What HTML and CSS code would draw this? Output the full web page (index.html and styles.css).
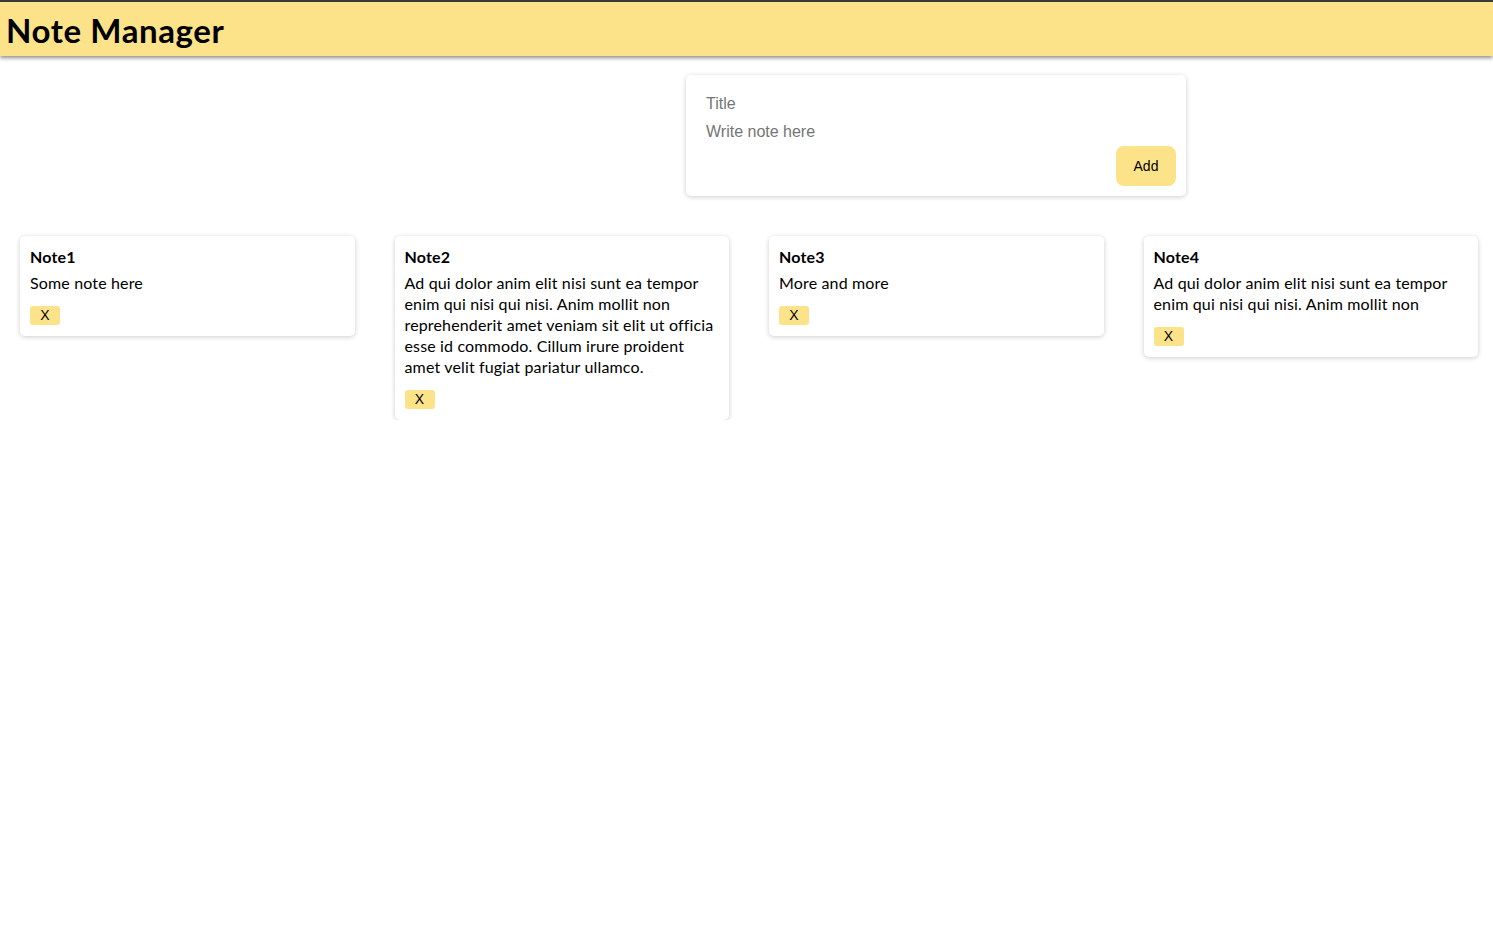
FILE: index.html
```
<!DOCTYPE html>
<html>
<head>
<meta charset="utf-8">
<title>Note Manager</title>
<link rel="stylesheet" href="styles.css">
</head>
<body>
<header class="header">
  <h1 class="header-title">Note Manager</h1>
</header>
<main class="main">
  <form class="note-form">
    <input class="form-title" type="text" placeholder="Title">
    <textarea class="form-body" placeholder="Write note here" rows="1"></textarea>
    <button class="add-btn" type="button">Add</button>
  </form>
  <section class="notes">
    <article class="note">
      <h2 class="note-title">Note1</h2>
      <p class="note-text">Some note here</p>
      <button class="del-btn" type="button">X</button>
    </article>
    <article class="note">
      <h2 class="note-title">Note2</h2>
      <p class="note-text">Ad qui dolor anim elit nisi sunt ea tempor enim qui nisi qui nisi. Anim mollit non reprehenderit amet veniam sit elit ut officia esse id commodo. Cillum irure proident amet velit fugiat pariatur ullamco.</p>
      <button class="del-btn" type="button">X</button>
    </article>
    <article class="note">
      <h2 class="note-title">Note3</h2>
      <p class="note-text">More and more</p>
      <button class="del-btn" type="button">X</button>
    </article>
    <article class="note">
      <h2 class="note-title">Note4</h2>
      <p class="note-text">Ad qui dolor anim elit nisi sunt ea tempor enim qui nisi qui nisi. Anim mollit non</p>
      <button class="del-btn" type="button">X</button>
    </article>
  </section>
</main>
</body>
</html>
```
FILE: styles.css
```
* { box-sizing: border-box; }

body {
  margin: 0;
  background: #ffffff;
  font-family: "Lato", "Noto Sans", sans-serif;
  color: #000;
}

.header {
  background: #fce38a;
  border-top: 2px solid #3a3a3a;
  height: 56px;
  padding: 2px 6px 0;
  display: flex;
  align-items: center;
  box-shadow: 0 2px 4px rgba(0, 0, 0, 0.45);
}

.header-title {
  margin: 0;
  font-size: 33px;
  font-weight: 700;
  line-height: 38px;
  letter-spacing: 0.6px;
}

.main {
  padding-top: 19px;
}

.note-form {
  width: 500px;
  margin-left: 686px;
  background: #fff;
  border-radius: 5px;
  box-shadow: 0 1px 5px rgba(0, 0, 0, 0.2);
  padding: 10px;
  display: flex;
  flex-direction: column;
}

.form-title,
.form-body {
  display: block;
  width: 100%;
  border: none;
  outline: none;
  font-family: "Liberation Sans", Arial, sans-serif;
  font-size: 16px;
  line-height: 18px;
  color: #000;
  background: transparent;
}

.form-title { padding: 10px 10px 9px; }

.form-body {
  padding: 1px 10px 0;
  height: 24px;
  resize: none;
  overflow: hidden;
}

.form-title::placeholder,
.form-body::placeholder { color: #757575; }

.add-btn {
  align-self: flex-end;
  width: 60px;
  height: 40px;
  border: none;
  border-radius: 8px;
  background: #fce38a;
  font-family: "Liberation Sans", Arial, sans-serif;
  font-size: 14px;
  color: #000;
}

.notes {
  display: grid;
  grid-template-columns: repeat(4, 1fr);
  gap: 40px;
  padding: 0 15px 0 20px;
  margin-top: 40px;
  align-items: start;
}

.note {
  background: #fff;
  border-radius: 5px;
  box-shadow: 0 1px 5px rgba(0, 0, 0, 0.2);
  padding: 10px 10px 11px;
}

.note-title {
  margin: 0;
  font-size: 16px;
  font-weight: 700;
  line-height: 21px;
  letter-spacing: 0.15px;
}

.note-text {
  margin: 5px 0 13px;
  font-size: 16px;
  line-height: 21px;
  letter-spacing: 0.15px;
}

.del-btn {
  display: block;
  width: 30px;
  height: 19px;
  padding: 0;
  border: none;
  border-radius: 3px;
  background: #fce38a;
  font-family: "Liberation Sans", Arial, sans-serif;
  font-size: 14px;
  line-height: 19px;
  color: #000;
}
```
